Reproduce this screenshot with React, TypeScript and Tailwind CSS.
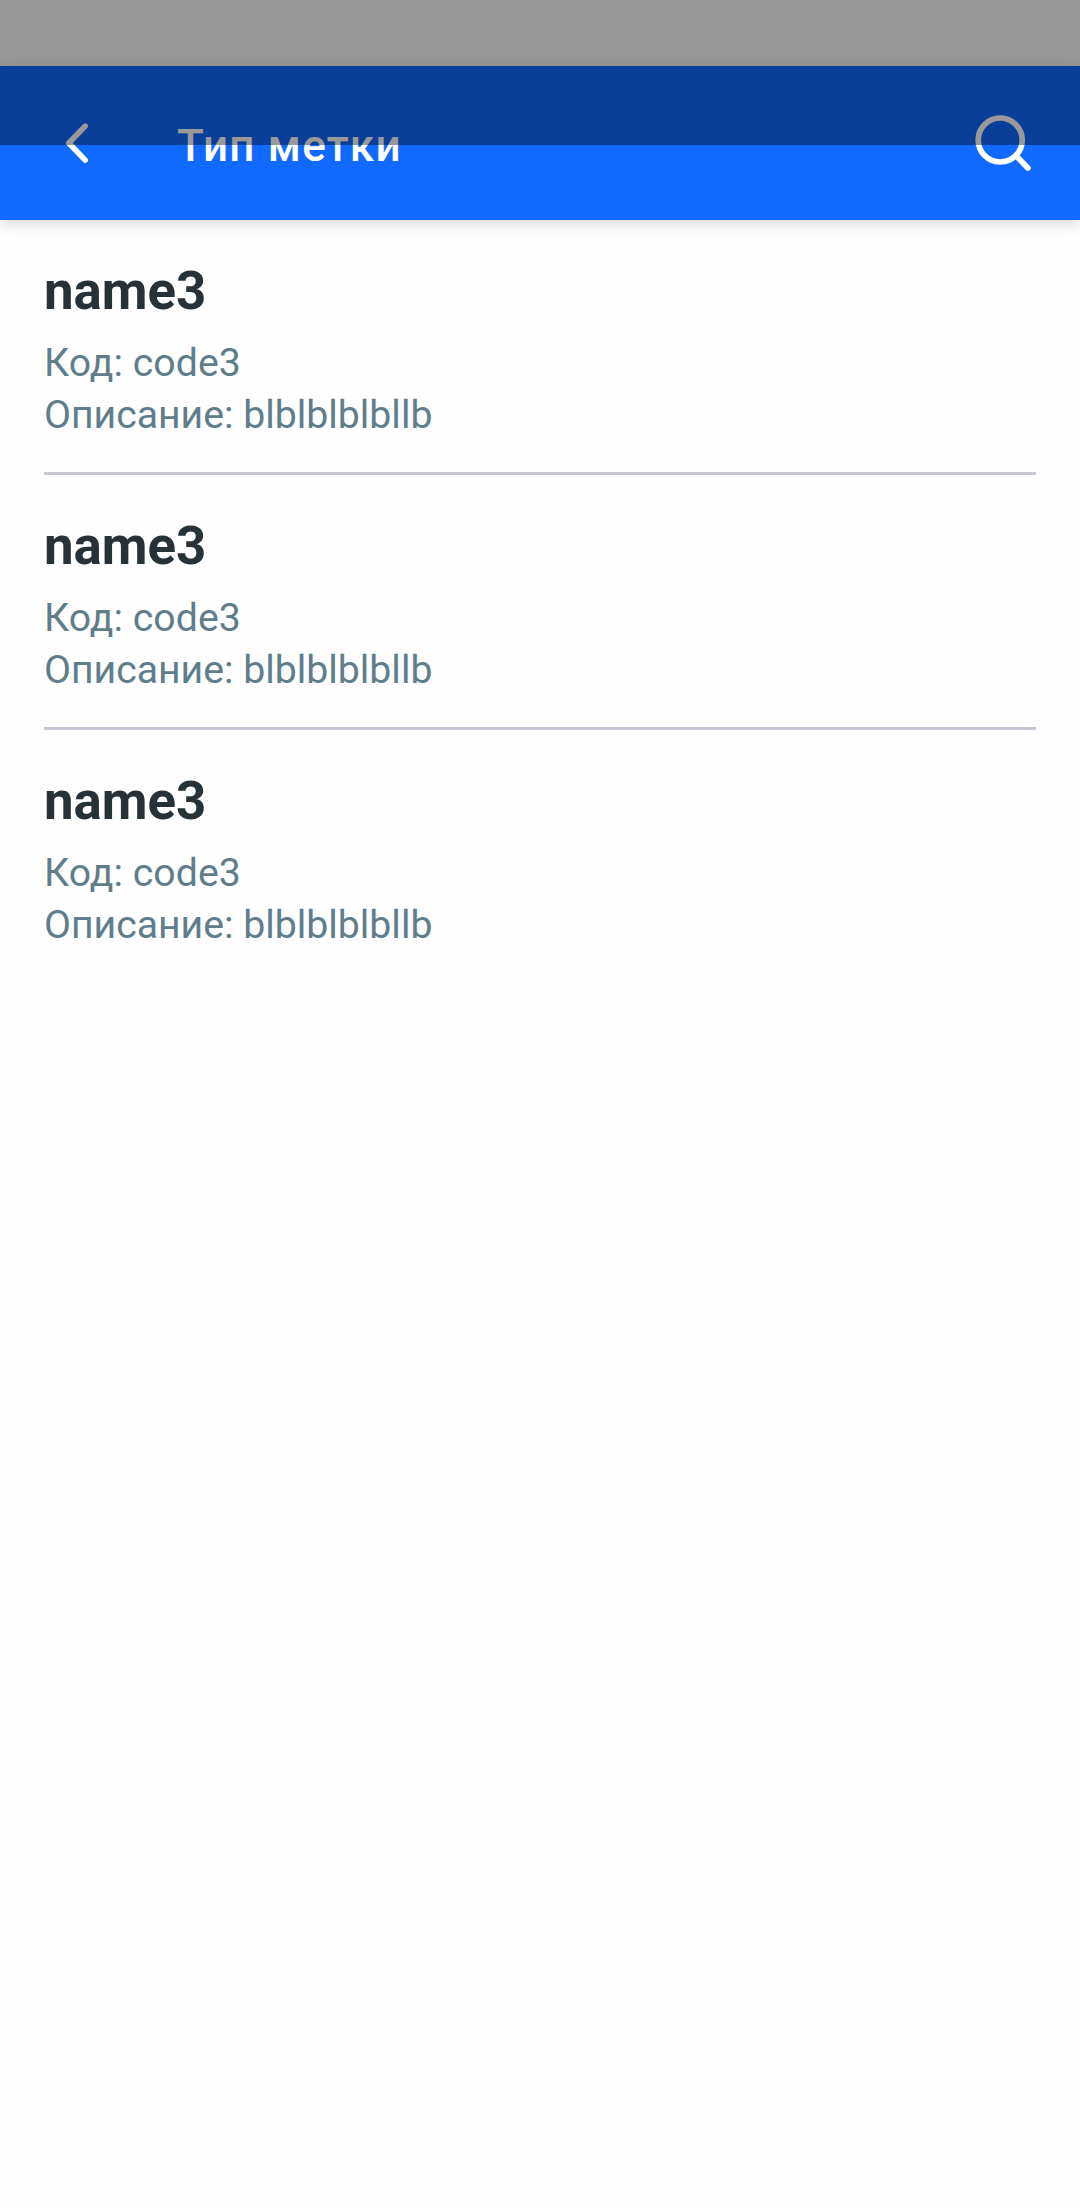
import React from "react";

const items = [
  { name: "name3", code: "code3", description: "blblblblbllb" },
  { name: "name3", code: "code3", description: "blblblblbllb" },
  { name: "name3", code: "code3", description: "blblblblbllb" },
];

function BackIcon() {
  return (
    <svg className="h-[44px] w-[44px]" viewBox="0 0 44 44" fill="none" stroke="currentColor" strokeWidth="5.6" strokeLinecap="round" strokeLinejoin="round">
      <path d="M29.2 5.1L12.8 22L29.2 39.1" />
    </svg>
  );
}

function SearchIcon() {
  return (
    <svg className="ml-auto h-[60px] w-[60px]" viewBox="0 0 60 60" fill="none" stroke="currentColor" strokeWidth="5.7" strokeLinecap="round">
      <circle cx="28.2" cy="27" r="22" />
      <path d="M44.2 43L55.9 54.9" />
    </svg>
  );
}

export default function App() {
  return (
    <div className="relative flex h-[2208px] w-[1080px] flex-col overflow-hidden bg-[#fefefe] font-['Roboto',sans-serif]">
      <div className="h-[66px] shrink-0" />
      <header className="flex h-[154px] shrink-0 items-center bg-[#116aff] pr-[48px] pl-[56px] text-white shadow-[0_3px_14px_rgba(0,0,0,0.16)]">
        <BackIcon />
        <h1 className="ml-[77px] pt-[6px] text-[44px] leading-[52px] font-medium tracking-[1.25px]">Тип метки</h1>
        <SearchIcon />
      </header>
      <main className="flex flex-col px-[44px]">
        {items.map((item, i) => (
          <article key={i} className="h-[255px] border-b-[3px] border-[#c5c7d4] pt-[39px] last:border-0">
            <h2 className="text-[52.8px] leading-[64px] font-bold text-[#263238]">{item.name}</h2>
            <div className="mt-[14px] text-[39.2px] leading-[52px] text-[#607d8b]">
              <p className="tracking-[0.06px]">Код: {item.code}</p>
              <p>Описание: {item.description}</p>
            </div>
          </article>
        ))}
      </main>
      <div className="absolute inset-x-0 top-0 h-[145px] bg-black/40" />
    </div>
  );
}
